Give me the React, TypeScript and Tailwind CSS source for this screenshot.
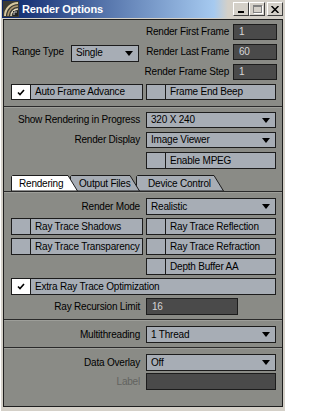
import React from 'react';

const Arrow = () => (
  <svg width="8" height="5" viewBox="0 0 8 5" className="shrink-0">
    <polygon points="0,0 8,0 4,5" fill="#000" />
  </svg>
);

const Check = () => (
  <svg width="8" height="7" viewBox="0 0 8 7">
    <path d="M1 3.5 L3 5.5 L7 1" stroke="#000" strokeWidth="1.6" fill="none" />
  </svg>
);

const Field: React.FC<{ value?: string; className?: string }> = ({ value, className = '' }) => (
  <div className={`flex items-center border border-[#1c1c1c] bg-[#4a4a4a] pl-[5px] text-[#d6d6d6] ${className}`}>
    {value}
  </div>
);

const Dropdown: React.FC<{ value: string; className?: string }> = ({ value, className = '' }) => (
  <div className={`flex items-center justify-between border border-[#1c1c1c] bg-[#a7adb5] pl-[4px] pr-[5px] ${className}`}>
    <span>{value}</span>
    <Arrow />
  </div>
);

const Toggle: React.FC<{ label: string; checked?: boolean; className?: string }> = ({
  label,
  checked,
  className = '',
}) => (
  <div className={`flex border border-[#1c1c1c] bg-[#a7adb5] ${className}`}>
    <div
      className={`flex w-[19px] shrink-0 items-center justify-center border-r border-[#1c1c1c] ${
        checked ? 'bg-white' : ''
      }`}
    >
      {checked && <Check />}
    </div>
    <div className="flex items-center pl-[4px] whitespace-nowrap">{label}</div>
  </div>
);

const Label: React.FC<{ children: React.ReactNode; className?: string }> = ({ children, className = '' }) => (
  <div className={`flex items-center justify-end pr-[3px] whitespace-nowrap ${className}`}>{children}</div>
);

const Sep = () => <div className="h-[2px] shrink-0 border-t border-[#2a2a2a] bg-[#9d9e99]" />;

const Tab: React.FC<{ label: string; w: number; active?: boolean; className: string }> = ({
  label,
  w,
  active,
  className,
}) => (
  <div className={`relative flex h-[16px] items-center ${className}`}>
    <svg className="absolute inset-0" width={w} height="16" viewBox={`0 0 ${w} 16`}>
      <polygon
        points={`0.5,16 0.5,1.5 1.5,0.5 ${w - 10},0.5 ${w - 0.5},16`}
        fill={active ? '#ffffff' : '#a7adb5'}
        stroke="#1c1c1c"
        strokeWidth="1"
      />
    </svg>
    <span className="relative whitespace-nowrap pt-[1px]">{label}</span>
  </div>
);

const TitleIcon = () => (
  <svg width="16" height="16" viewBox="0 0 16 16">
    <rect width="16" height="16" fill="#3a3a34" />
    <path d="M2 15 A13 13 0 0 1 15 2" stroke="#d8c8a0" strokeWidth="2" fill="none" />
    <path d="M5 15 A10 10 0 0 1 15 5" stroke="#b09870" strokeWidth="1.5" fill="none" />
    <path d="M8 15 A7 7 0 0 1 15 8" stroke="#e8dcc0" strokeWidth="1.5" fill="none" />
    <rect x="10" y="10" width="5" height="5" fill="#222" />
    <path d="M11 11 h3 M11 11 v3" stroke="#ccc" strokeWidth="1" />
  </svg>
);

const WinButton: React.FC<{ children: React.ReactNode; className?: string }> = ({ children, className = '' }) => (
  <div
    className={`flex h-[14px] w-[16px] items-center justify-center border border-t-white border-l-white border-r-[#404040] border-b-[#404040] bg-[#d4d0c8] ${className}`}
  >
    {children}
  </div>
);

export default function App() {
  return (
    <div className="flex h-[411px] w-[285px] flex-col border-l border-l-white bg-[#d4d0c8] px-[1px] pb-[4px] font-['Liberation_Sans',Arial,sans-serif] text-[10px] leading-none tracking-[-0.2px] text-black">
      {/* Title bar */}
      <div className="flex h-[18px] shrink-0 items-center bg-[linear-gradient(to_right,#0a246a_0px,#a6caf0_212px,#d4d0c8_226px)] pl-[1px] pr-[1px]">
        <TitleIcon />
        <span className="ml-[3px] text-[11px] font-bold tracking-[-0.1px] text-white">Render Options</span>
        <div className="ml-auto flex items-center">
          <WinButton>
            <div className="mt-[6px] h-[2px] w-[6px] bg-black" />
          </WinButton>
          <WinButton>
            <div className="h-[8px] w-[9px] border border-t-2 border-[#808080] shadow-[1px_1px_0_#fff]" />
          </WinButton>
          <WinButton className="ml-[2px]">
            <svg width="8" height="7" viewBox="0 0 8 7">
              <path d="M0.5 0 L7.5 7 M7.5 0 L0.5 7" stroke="#000" strokeWidth="1.5" />
            </svg>
          </WinButton>
        </div>
      </div>
      <div className="h-[1px] shrink-0" />

      {/* Body */}
      <div className="mx-[1px] flex flex-1 flex-col border border-[#1e1e1e] bg-[#8a8b86]">
        {/* Frame range */}
        <div className="flex flex-col gap-[4px] pt-[4px] pr-[5px] pb-[6px] pl-[7px]">
          <div className="flex h-[16px] items-center justify-end gap-[4px]">
            <span>Render First Frame</span>
            <Field value="1" className="h-[16px] w-[44px]" />
          </div>
          <div className="flex h-[16px] items-center">
            <span className="w-[60px] pl-[1px]">Range Type</span>
            <Dropdown value="Single" className="mt-[2px] h-[17px] w-[68px]" />
            <div className="flex flex-1 items-center justify-end gap-[4px]">
              <span>Render Last Frame</span>
              <Field value="60" className="h-[16px] w-[44px]" />
            </div>
          </div>
          <div className="flex h-[16px] items-center justify-end gap-[4px]">
            <span>Render Frame Step</span>
            <Field value="1" className="h-[16px] w-[44px]" />
          </div>
          <div className="grid grid-cols-[132px_130px] gap-x-[3px]">
            <Toggle label="Auto Frame Advance" checked className="h-[16px]" />
            <Toggle label="Frame End Beep" className="h-[16px]" />
          </div>
        </div>
        <Sep />

        {/* Display */}
        <div className="flex flex-col pt-[4px] pr-[5px] pl-[7px]">
          <div className="grid grid-cols-[132px_130px] gap-x-[3px] gap-y-[4px]">
            <Label className="h-[16px]">Show Rendering in Progress</Label>
            <Dropdown value="320 X 240" className="h-[16px]" />
            <Label className="h-[16px]">Render Display</Label>
            <Dropdown value="Image Viewer" className="h-[16px]" />
            <Toggle label="Enable MPEG" className="col-start-2 h-[17px]" />
          </div>
          <div className="mt-[6px] flex items-end">
            <Tab label="Rendering" w={67} active className="z-30 w-[67px] pl-[8px]" />
            <Tab label="Output Files" w={70} className="z-20 -ml-[8px] w-[70px] pl-[9px]" />
            <Tab label="Device Control" w={88} className="z-10 -ml-[4px] w-[88px] pl-[12px]" />
          </div>
        </div>
        <Sep />

        {/* Rendering tab */}
        <div className="pt-[5px] pr-[5px] pb-[4px] pl-[7px]">
          <div className="grid grid-cols-[132px_130px] gap-x-[3px] gap-y-[3px]">
            <Label className="h-[17px]">Render Mode</Label>
            <Dropdown value="Realistic" className="h-[17px]" />
            <Toggle label="Ray Trace Shadows" className="h-[17px]" />
            <Toggle label="Ray Trace Reflection" className="h-[17px]" />
            <Toggle label="Ray Trace Transparency" className="h-[17px]" />
            <Toggle label="Ray Trace Refraction" className="h-[17px]" />
            <Toggle label="Depth Buffer AA" className="col-start-2 h-[17px]" />
            <Toggle label="Extra Ray Trace Optimization" checked className="col-span-2 h-[17px]" />
            <Label className="h-[17px]">Ray Recursion Limit</Label>
            <Field value="16" className="h-[17px] w-[92px]" />
          </div>
        </div>
        <Sep />

        {/* Threads */}
        <div className="pt-[5px] pr-[5px] pb-[4px] pl-[7px]">
          <div className="grid grid-cols-[132px_130px] gap-x-[3px]">
            <Label className="h-[17px]">Multithreading</Label>
            <Dropdown value="1 Thread" className="h-[17px]" />
          </div>
        </div>
        <Sep />

        {/* Overlay */}
        <div className="pt-[5px] pr-[5px] pl-[7px]">
          <div className="grid grid-cols-[132px_130px] gap-x-[3px] gap-y-[2px]">
            <Label className="h-[17px]">Data Overlay</Label>
            <Dropdown value="Off" className="h-[17px]" />
            <Label className="h-[17px] text-[#62635f]">Label</Label>
            <Field className="h-[17px]" />
          </div>
        </div>
      </div>
    </div>
  );
}
